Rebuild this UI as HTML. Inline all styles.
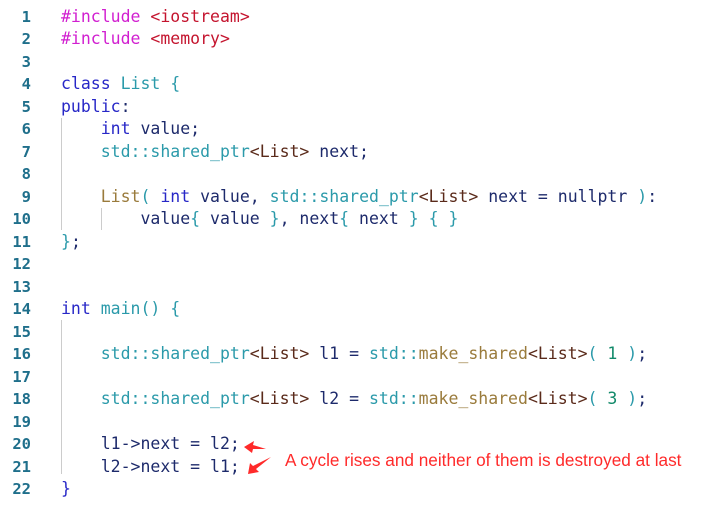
<!DOCTYPE html>
<html><head><meta charset="utf-8"><style>
body{margin:0;background:#fff;width:709px;height:526px;overflow:hidden;position:relative}
.c{position:absolute;left:0;top:6px;font-family:"DejaVu Sans Mono",monospace;font-size:16.5px;line-height:22.48px;white-space:pre;color:#1d2a6b}
.ln{position:absolute;left:0;width:31px;text-align:right;color:#1f6f8b;font-weight:bold;font-size:15.5px}
.t{position:absolute;left:61px}
.pp{color:#d11fd0}.inc{color:#c4142e}.kw{color:#2727c7}.ty{color:#2b9aaa}.br{color:#5a2a1a}.nm{color:#128a6a}.fn{color:#9a7b3c}.bl{color:#1d2a6b}
.g{position:absolute;width:1px;background:#ccc}
.ann{position:absolute;left:285px;top:450px;font-family:"Liberation Sans",sans-serif;font-size:17.2px;color:#ff2a2a;white-space:nowrap}
</style></head><body>
<div class="g" style="left:61px;top:118px;height:112px"></div>
<div class="g" style="left:101px;top:208px;height:22px"></div>
<div class="g" style="left:61px;top:320px;height:154px"></div>
<div class="c">
<div class="ln" style="top:0">1</div><div class="t" style="top:0"><span class="pp">#include</span> <span class="inc">&lt;iostream&gt;</span></div>
<div class="ln" style="top:22.48px">2</div><div class="t" style="top:22.48px"><span class="pp">#include</span> <span class="inc">&lt;memory&gt;</span></div>
<div class="ln" style="top:44.96px">3</div>
<div class="ln" style="top:67.44px">4</div><div class="t" style="top:67.44px"><span class="kw">class</span> <span class="ty">List {</span></div>
<div class="ln" style="top:89.92px">5</div><div class="t" style="top:89.92px"><span class="kw">public</span>:</div>
<div class="ln" style="top:112.4px">6</div><div class="t" style="top:112.4px">    <span class="kw">int</span> value;</div>
<div class="ln" style="top:134.88px">7</div><div class="t" style="top:134.88px">    <span class="ty">std::shared_ptr</span><span class="br">&lt;List&gt;</span> next;</div>
<div class="ln" style="top:157.36px">8</div>
<div class="ln" style="top:179.84px">9</div><div class="t" style="top:179.84px">    <span class="fn">List</span><span class="ty">(</span> <span class="kw">int</span> value, <span class="ty">std::shared_ptr</span><span class="br">&lt;List&gt;</span> next = nullptr <span class="ty">)</span>:</div>
<div class="ln" style="top:202.32px">10</div><div class="t" style="top:202.32px">        value<span class="ty">{</span> value <span class="ty">}</span>, next<span class="ty">{</span> next <span class="ty">} { }</span></div>
<div class="ln" style="top:224.8px">11</div><div class="t" style="top:224.8px"><span class="ty">}</span>;</div>
<div class="ln" style="top:247.28px">12</div>
<div class="ln" style="top:269.76px">13</div>
<div class="ln" style="top:292.24px">14</div><div class="t" style="top:292.24px"><span class="kw">int</span> <span class="ty">main() {</span></div>
<div class="ln" style="top:314.72px">15</div>
<div class="ln" style="top:337.2px">16</div><div class="t" style="top:337.2px">    <span class="ty">std::shared_ptr</span><span class="br">&lt;List&gt;</span> l1 = <span class="ty">std::</span><span class="fn">make_shared</span><span class="br">&lt;List&gt;</span><span class="ty">(</span> <span class="nm">1</span> <span class="ty">)</span>;</div>
<div class="ln" style="top:359.68px">17</div>
<div class="ln" style="top:382.16px">18</div><div class="t" style="top:382.16px">    <span class="ty">std::shared_ptr</span><span class="br">&lt;List&gt;</span> l2 = <span class="ty">std::</span><span class="fn">make_shared</span><span class="br">&lt;List&gt;</span><span class="ty">(</span> <span class="nm">3</span> <span class="ty">)</span>;</div>
<div class="ln" style="top:404.64px">19</div>
<div class="ln" style="top:427.12px">20</div><div class="t" style="top:427.12px">    l1-&gt;next = l2;</div>
<div class="ln" style="top:449.6px">21</div><div class="t" style="top:449.6px">    l2-&gt;next = l1;</div>
<div class="ln" style="top:472.08px">22</div><div class="t" style="top:472.08px"><span class="kw">}</span></div>
</div>
<svg style="position:absolute;left:0;top:0" width="709" height="526">
<path d="M244 447 L254 441 L253 445 L266 449 L253 449 L252 453 Z" fill="#ff2a2a"/>
<path d="M248 474 L250 463 L253 466 L271 457 L256 469 L259 472 Z" fill="#ff2a2a"/>
</svg>
<div class="ann">A cycle rises and neither of them is destroyed at last</div>
</body></html>
